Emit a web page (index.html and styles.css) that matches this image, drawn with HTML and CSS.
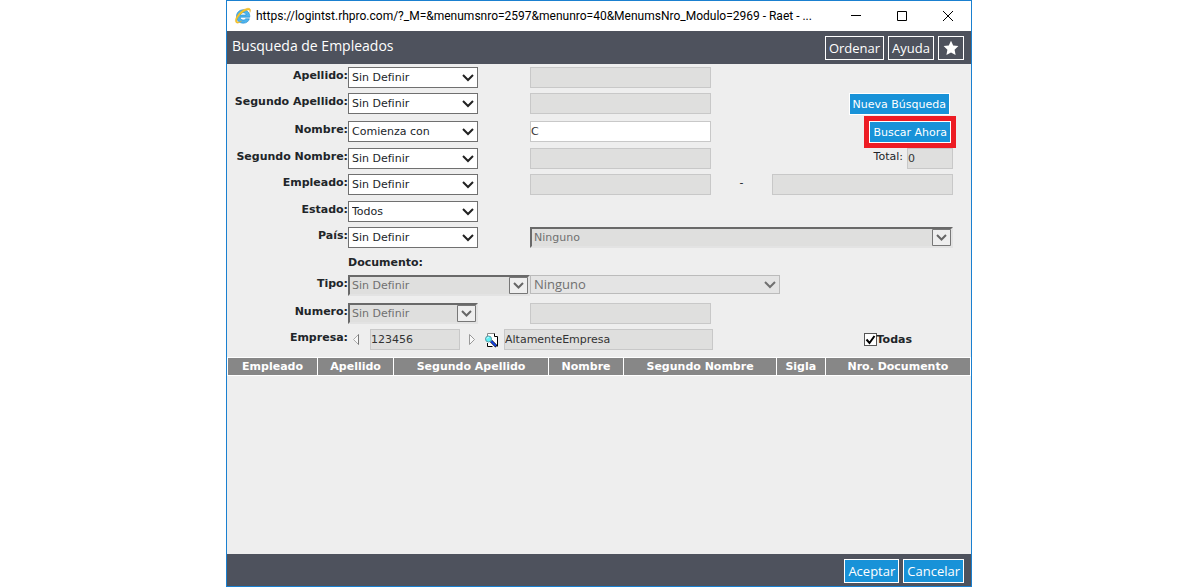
FILE: index.html
```html
<!DOCTYPE html>
<html lang="es">
<head>
<meta charset="utf-8">
<title>Busqueda de Empleados</title>
<link rel="stylesheet" href="styles.css">
</head>
<body>
<div class="window">
  <div class="titlebar">
    <svg class="browser-icon" viewBox="0 0 18 18" width="18" height="18" aria-hidden="true">
      <path d="M15.800 10.200H6.200c.1 1.700 1.300 2.800 3 2.800 1.200 0 2-.4 2.500-1.200h3.700c-.8 2.700-3 4.400-6.100 4.400-4 0-6.800-2.800-6.800-6.700S5.300 2.800 9.200 2.800s6.900 2.900 6.600 7.400zM6.200 8h5.900c-.2-1.400-1.400-2.300-2.900-2.300S6.400 6.600 6.200 8z" fill="#4db4ee" stroke="#1b86cc" stroke-width=".6"/>
      <path d="M2.200 15.800C-.6 13.200 4 5.800 9.300 2.800c4-2.300 7.600-2.200 7.200.8-.1.700-.3 1.300-.7 2 .3-1.700-.2-2.700-1.700-2.600-2.500.2-6 2.500-8.500 5.500C2.800 11.800 2 14.600 4.300 14.900c1 .1 2.200-.3 3.300-.9-2 1.900-4.300 2.800-5.400 1.800z" fill="#f6c62c" stroke="#d89c12" stroke-width=".3"/>
    </svg>
    <span class="address">https://logintst.rhpro.com/?_M=&amp;menumsnro=2597&amp;menunro=40&amp;MenumsNro_Modulo=2969 - Raet - ...</span>
    <div class="window-controls">
      <button class="window-button" aria-label="Minimizar"><svg viewBox="0 0 12 12" width="12" height="12"><path d="M1 5.500h10" stroke="#000" fill="none"/></svg></button>
      <button class="window-button" aria-label="Maximizar"><svg viewBox="0 0 12 12" width="12" height="12"><path d="M1.500 1.500h9v9h-9z" stroke="#000" fill="none"/></svg></button>
      <button class="window-button" aria-label="Cerrar"><svg viewBox="0 0 12 12" width="12" height="12"><path d="M1 1l10 10M11 1L1 11" stroke="#000" fill="none"/></svg></button>
    </div>
  </div>

  <header class="header">
    <h1 class="heading">Busqueda de Empleados</h1>
    <div class="actions">
      <button class="bar-button">Ordenar</button>
      <button class="bar-button">Ayuda</button>
      <button class="bar-button star" aria-label="Favorito"><svg viewBox="0 0 16 16" width="16" height="16"><path d="M8 .8l2.200 4.700 5.200.6-3.800 3.600 1 5.200L8 12.400l-4.600 2.500 1-5.200L.6 6.100l5.200-.6z" fill="#fff"/></svg></button>
    </div>
  </header>

  <main class="content">
    <form class="search">
      <label class="label" for="apellido-op">Apellido:</label>
      <select class="select" id="apellido-op"><option>Sin Definir</option></select>
      <input class="field" aria-label="Apellido" disabled>

      <label class="label" for="apellido2-op">Segundo Apellido:</label>
      <select class="select" id="apellido2-op"><option>Sin Definir</option></select>
      <input class="field" aria-label="Segundo Apellido" disabled>
      <button type="button" class="button side">Nueva Búsqueda</button>

      <label class="label" for="nombre-op">Nombre:</label>
      <select class="select" id="nombre-op"><option>Comienza con</option></select>
      <input class="field" aria-label="Nombre" value="C">
      <button type="button" class="button side highlighted">Buscar Ahora</button>

      <label class="label" for="nombre2-op">Segundo Nombre:</label>
      <select class="select" id="nombre2-op"><option>Sin Definir</option></select>
      <input class="field" aria-label="Segundo Nombre" disabled>
      <div class="total side">
        <label class="total-label" for="total">Total:</label>
        <input class="field total-field" id="total" value="0" disabled>
      </div>

      <label class="label" for="empleado-op">Empleado:</label>
      <select class="select" id="empleado-op"><option>Sin Definir</option></select>
      <input class="field" aria-label="Empleado desde" disabled>
      <span class="dash">-</span>
      <input class="field" aria-label="Empleado hasta" disabled>

      <label class="label" for="estado">Estado:</label>
      <select class="select" id="estado"><option>Todos</option></select>

      <label class="label" for="pais-op">País:</label>
      <select class="select" id="pais-op"><option>Sin Definir</option></select>
      <select class="select inset wide" aria-label="País" disabled><option>Ninguno</option></select>

      <span class="section">Documento:</span>

      <label class="label" for="tipo-op">Tipo:</label>
      <select class="select inset full" id="tipo-op" disabled><option>Sin Definir</option></select>
      <select class="select muted" aria-label="Tipo de documento" disabled><option>Ninguno</option></select>

      <label class="label" for="numero-op">Numero:</label>
      <select class="select inset" id="numero-op" disabled><option>Sin Definir</option></select>
      <input class="field" aria-label="Numero" disabled>

      <label class="label" for="empresa">Empresa:</label>
      <div class="company">
        <button type="button" class="icon-button" aria-label="Anterior"><svg viewBox="0 0 8 13" width="8" height="13"><path d="M6.500 1.500L1.500 6.500l5 5z" fill="#f8f8f8" stroke="#aaa"/><path d="M6.500 1.500v10" stroke="#777"/></svg></button>
        <input class="field company-code" id="empresa" value="123456" disabled>
        <button type="button" class="icon-button" aria-label="Siguiente"><svg viewBox="0 0 8 13" width="8" height="13"><path d="M1.500 1.500l5 5-5 5z" fill="#f8f8f8" stroke="#999"/></svg></button>
        <button type="button" class="icon-button" aria-label="Buscar empresa"><svg viewBox="0 0 16 16" width="16" height="16">
          <path d="M3.500 1h7l3 3v10.500h-10z" fill="#fff"/>
          <path d="M3.500 4V1.500h7" stroke="#888" fill="none"/>
          <path d="M10.500 1.500v3h3v10M3.500 11v3.500h5" stroke="#000" fill="none"/>
          <path d="M7 9l5.500 5.500" stroke="#000" stroke-width="3"/>
          <path d="M7 9l5 5" stroke="#1846e8" stroke-width="1.800"/>
          <circle cx="4.500" cy="7" r="3" fill="#5cf0f4" stroke="#5a9aa6"/>
          <path d="M3 6.500l1.500-1.500" stroke="#fff"/>
        </svg></button>
        <input class="field company-name" aria-label="Nombre de empresa" value="AltamenteEmpresa" disabled>
        <label class="all"><input class="checkbox" type="checkbox" checked>Todas</label>
      </div>
    </form>

    <table class="results">
      <colgroup><col class="c-id"><col class="c-surname"><col class="c-surname2"><col class="c-name"><col class="c-name2"><col class="c-code"><col></colgroup>
      <thead>
        <tr><th>Empleado</th><th>Apellido</th><th>Segundo Apellido</th><th>Nombre</th><th>Segundo Nombre</th><th>Sigla</th><th>Nro. Documento</th></tr>
      </thead>
    </table>
  </main>

  <footer class="footer">
    <button class="bar-button primary">Aceptar</button>
    <button class="bar-button primary">Cancelar</button>
  </footer>
</div>
</body>
</html>
```
FILE: styles.css
```css
* { box-sizing: border-box; }

body {
  margin: 0;
  padding-right: 3px;
  display: flex;
  justify-content: center;
  background: #fff;
  color: #212529;
  font: 11px/17px "DejaVu Sans", Verdana, sans-serif;
}

button, input, select { margin: 0; font: inherit; color: inherit; }
button { border: 0; padding: 0; background: none; white-space: nowrap; }
svg { display: block; }

.window {
  width: 100%;
  max-width: 746px;
  min-height: 100vh;
  display: flex;
  flex-direction: column;
  border: 1px solid #1a80d0;
}

.titlebar {
  display: flex;
  align-items: center;
  height: 30px;
  padding-left: 7px;
  background: #fff;
  color: #000;
}
.browser-icon { flex: none; }
.address {
  flex: 1;
  min-width: 0;
  margin-left: 4px;
  white-space: nowrap;
  font-family: Roboto, "Segoe UI", sans-serif;
  font-size: 12px;
}
.window-controls { display: flex; }
.window-button {
  width: 46px;
  height: 28px;
  display: grid;
  place-items: center;
}

.header {
  display: flex;
  justify-content: space-between;
  height: 33px;
  padding: 5px 7px 0 5px;
  background: #4e525d;
  color: #fff;
}
.heading {
  margin: 0;
  font: 14px/20px "Open Sans", "Segoe UI", sans-serif;
}
.actions { display: flex; gap: 4px; }
.bar-button {
  height: 24px;
  padding: 0 3px;
  border: 1px solid #fff;
  color: #fff;
  font: 13px/20px "Open Sans", "Segoe UI", sans-serif;
}
.star { padding: 0 4px; }
.primary { background: #1892d8; }

.content { flex: 1; background: #eee; }

.search {
  display: grid;
  grid-template-columns: 121px 182px 181px 61px 181px;
  grid-template-rows: 26px 28px 27px 26px 27px 26px 27px 21px 28px 26px 28px;
  align-items: start;
  padding-top: 3px;
}
.label {
  grid-column: 1;
  text-align: right;
  font-weight: bold;
}
.section { grid-column: 2; font-weight: bold; }

.select {
  appearance: none;
  width: 130px;
  height: 21px;
  padding: 0 20px 0 3px;
  border: 1px solid #707070;
  border-radius: 0;
  background: #fff url("data:image/svg+xml,%3Csvg xmlns='http://www.w3.org/2000/svg' width='12' height='8'%3E%3Cpath d='M1 1l5 5 5-5' fill='none' stroke='%23222' stroke-width='2'/%3E%3C/svg%3E") no-repeat right 3px center;
}
.select:disabled { opacity: 1; color: #707070; }
.inset {
  padding-left: 2px;
  border-width: 2px;
  border-color: #696969 #e3e3e3 #e3e3e3 #696969;
  background: #dfdfde url("data:image/svg+xml,%3Csvg xmlns='http://www.w3.org/2000/svg' width='19' height='17'%3E%3Cpath d='M.5.5h18v16H.5z' fill='%23eee' stroke='%23777'/%3E%3Cpath d='M5 6l4.500 4.500L14 6' fill='none' stroke='%23666' stroke-width='2'/%3E%3C/svg%3E") no-repeat right center;
}
.full { width: 182px; }
.wide { grid-column: 3 / 6; width: 423px; }
.muted {
  grid-column: 3 / 6;
  width: 250px;
  height: 19px;
  border-color: #bbb;
  background-color: #e4e4e4;
  background-image: url("data:image/svg+xml,%3Csvg xmlns='http://www.w3.org/2000/svg' width='12' height='8'%3E%3Cpath d='M1 1l5 5 5-5' fill='none' stroke='%23707070' stroke-width='2'/%3E%3C/svg%3E");
  font-family: "Open Sans", "Segoe UI", sans-serif;
  font-size: 13px;
}

.field {
  width: 100%;
  min-width: 0;
  height: 21px;
  padding: 0;
  border: 1px solid #c8c8c8;
  border-radius: 0;
  background: #fff;
  color: #333;
}
.field:disabled { background: #dfdfde; }

.dash { text-align: center; }

.side { grid-column: 5; justify-self: end; }
.button {
  height: 22px;
  margin-right: 3px;
  padding: 0 3px;
  border: 1px solid #fff;
  background: #1892d8;
  color: #fff;
}
.highlighted { margin-right: 2px; outline: 5px solid #ed1c24; }
.total { display: flex; gap: 4px; }
.total-field { width: 46px; }

.company {
  grid-column: 2 / 6;
  display: flex;
  align-items: center;
  height: 21px;
  padding-left: 4px;
}
.icon-button { flex: none; }
.company-code { width: 90px; margin: 0 8px 0 10px; }
.company-name { width: 209px; margin-left: 4px; }
.icon-button + .icon-button { margin-left: 8px; }
.all {
  display: flex;
  align-items: center;
  margin-left: auto;
  padding-right: 41px;
  font-weight: bold;
}
.checkbox {
  appearance: none;
  width: 13px;
  height: 13px;
  border: 1px solid #555;
  background: #fff;
}
.checkbox:checked {
  background: #fff url("data:image/svg+xml,%3Csvg xmlns='http://www.w3.org/2000/svg' width='11' height='11'%3E%3Cpath d='M1.500 5.500l3 3.500 5-7' fill='none' stroke='%23000' stroke-width='2'/%3E%3C/svg%3E") no-repeat center;
}

.results {
  width: 100%;
  table-layout: fixed;
  border-spacing: 1px;
  background: #fff;
}
.results th {
  height: 17px;
  padding: 0;
  background: #878787;
  color: #fff;
  line-height: 17px;
}
.c-id { width: 12.1%; }
.c-surname { width: 10.2%; }
.c-surname2 { width: 20.9%; }
.c-name { width: 10.1%; }
.c-name2 { width: 20.6%; }
.c-code { width: 6.5%; }

.footer {
  display: flex;
  justify-content: flex-end;
  gap: 4px;
  height: 32px;
  padding: 5px 7px 0;
  background: #4e525d;
}
```
